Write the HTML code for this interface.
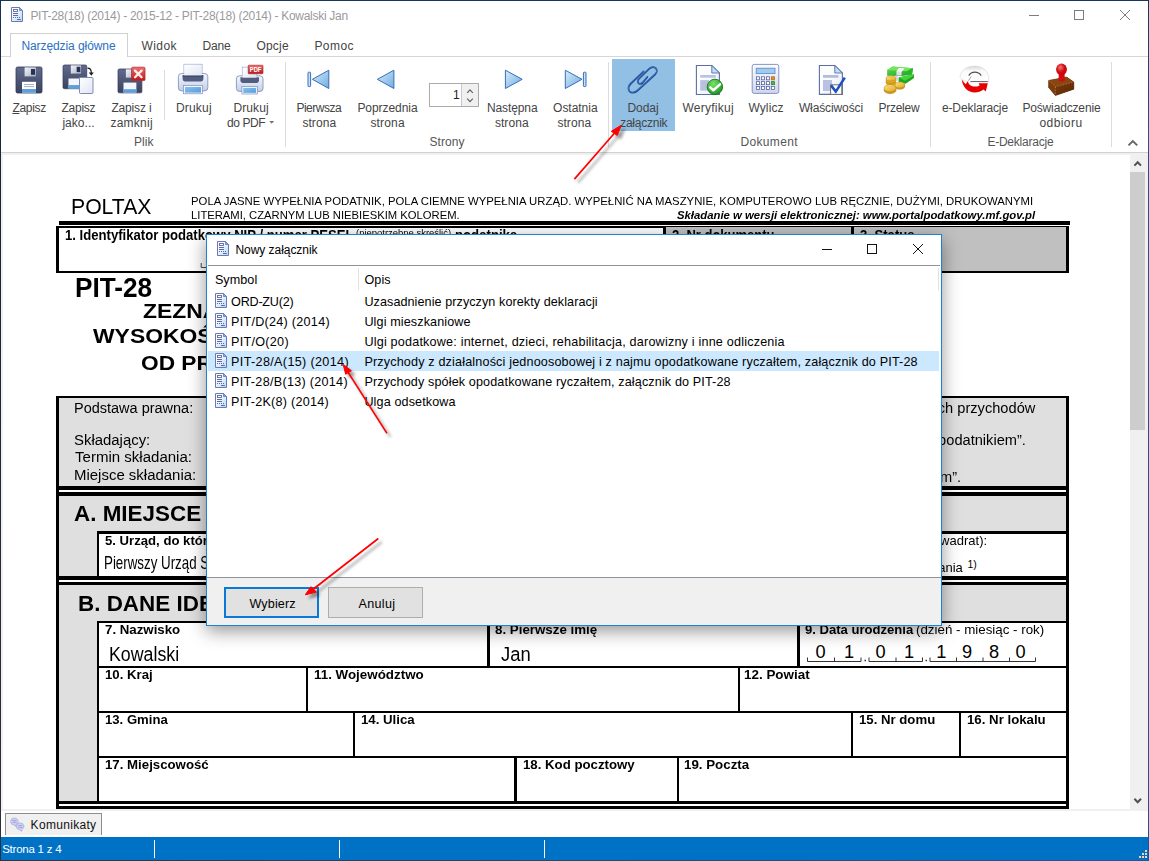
<!DOCTYPE html>
<html lang="pl"><head><meta charset="utf-8"><title>PIT-28(18) (2014)</title>
<style>
*{box-sizing:border-box;margin:0;padding:0}
html,body{width:1149px;height:861px;overflow:hidden;background:#fff;font-family:"Liberation Sans",sans-serif}
#app{position:absolute;left:0;top:0;width:1149px;height:861px;overflow:hidden;background:#fff}
.a{position:absolute}
.t{position:absolute;white-space:pre;font-family:"Liberation Sans",sans-serif}
.t u{text-decoration:underline;text-underline-offset:1px}
.k{position:absolute;background:#000}
.sepv{position:absolute;width:1px;background:#dcdcdc}
svg{position:absolute;overflow:visible}
</style></head><body><div id="app">
<!-- window frame -->
<div class="a" style="left:0;top:0;width:1149px;height:1px;background:#18355a"></div>
<div class="a" style="left:0;top:0;width:1px;height:861px;background:linear-gradient(#18304f,#1b2433 20%,#2b313b)"></div>
<div class="a" style="left:1148px;top:0;width:1px;height:861px;background:linear-gradient(#18355a,#23508c 15%,#23508c)"></div>
<div class="a" style="left:0;top:860px;width:1149px;height:1px;background:linear-gradient(90deg,#30363e,#2a5590)"></div>
<!-- tab strip -->
<div class="a" style="left:1px;top:56px;width:1147px;height:1px;background:#d6d6d6"></div>
<div class="a" style="left:10px;top:33px;width:118px;height:24px;background:#fff;border:1px solid #d0d0d0;border-bottom:none"></div>
<!-- ribbon bottom -->
<div class="a" style="left:1px;top:152px;width:1147px;height:1px;background:#d2d2d2"></div>
<div class="a" style="left:1px;top:153px;width:1147px;height:684px;background:#f0f0f0"></div>
<!-- ribbon separators -->
<div class="sepv" style="left:164px;top:70px;height:50px"></div>
<div class="sepv" style="left:285px;top:62px;height:85px"></div>
<div class="sepv" style="left:608px;top:62px;height:85px"></div>
<div class="sepv" style="left:930px;top:62px;height:85px"></div>
<div class="sepv" style="left:1111px;top:62px;height:85px"></div>
<!-- highlighted button -->
<div class="a" style="left:612px;top:59px;width:63px;height:72px;background:#91c0e4"></div>
<!-- spinner -->
<div class="a" style="left:429px;top:83px;width:50px;height:24px;background:#fff;border:1px solid #ababab"></div>
<div class="a" style="left:461px;top:84px;width:17px;height:22px;background:#f0f0f0;border-left:1px solid #c8c8c8"></div>
<!-- document viewer -->
<div class="a" id="doc" style="left:3px;top:155px;width:1127px;height:654px;background:#fff;overflow:hidden">
<div class="a" style="left:-3px;top:-155px;width:1149px;height:861px">
<!-- header rule -->
<div class="k" style="left:59px;top:221px;width:1011px;height:4px"></div>
<!-- row of boxes 1/2/3 -->
<div class="k" style="left:56px;top:226px;width:1013px;height:47px"></div>
<div class="a" style="left:59px;top:228px;width:604px;height:43px;background:#fff"></div>
<div class="a" style="left:666px;top:227px;width:185px;height:44px;background:#c0c0c0"></div>
<div class="a" style="left:854px;top:227px;width:212px;height:44px;background:#c0c0c0"></div>
<!-- big frame: left/right borders continuous 396..809 -->
<div class="k" style="left:56px;top:396px;width:1013px;height:413px"></div>
<!-- gray info box -->
<div class="a" style="left:59px;top:398px;width:1007px;height:88px;background:#dfdfdf"></div>
<div class="a" style="left:59px;top:490px;width:1007px;height:2px;background:#fff"></div>
<!-- section A -->
<div class="a" style="left:59px;top:496px;width:1007px;height:80px;background:#dfdfdf"></div>
<div class="k" style="left:97px;top:531.2px;width:969px;height:45px"></div>
<div class="a" style="left:99.2px;top:533.9px;width:966.8px;height:42.1px;background:#fff"></div>
<div class="a" style="left:59px;top:580px;width:1007px;height:2px;background:#fff"></div>
<!-- section B -->
<div class="a" style="left:59px;top:585px;width:1007px;height:216px;background:#dfdfdf"></div>
<div class="a" style="left:59px;top:804px;width:1007px;height:2px;background:#fff"></div>
<div class="k" style="left:97px;top:621px;width:969px;height:183px"></div>
<div class="a" style="left:99px;top:622.8px;width:967px;height:43.2px;background:#fff"></div>
<div class="a" style="left:99px;top:668px;width:967px;height:43px;background:#fff"></div>
<div class="a" style="left:99px;top:713px;width:967px;height:43px;background:#fff"></div>
<div class="a" style="left:99px;top:758px;width:967px;height:43px;background:#fff"></div>
<!-- column rules -->
<div class="k" style="left:487.2px;top:622px;width:2.8px;height:45px"></div>
<div class="k" style="left:797.1px;top:622px;width:2.5px;height:45px"></div>
<div class="k" style="left:306.2px;top:667px;width:2px;height:45px"></div>
<div class="k" style="left:737.5px;top:667px;width:2px;height:45px"></div>
<div class="k" style="left:353.1px;top:712px;width:2px;height:45px"></div>
<div class="k" style="left:851.2px;top:712px;width:2px;height:45px"></div>
<div class="k" style="left:959.1px;top:712px;width:2px;height:45px"></div>
<div class="k" style="left:514.4px;top:757px;width:2.5px;height:45px"></div>
<div class="k" style="left:676.5px;top:757px;width:2px;height:45px"></div>
<!-- date comb -->
<svg style="left:0;top:0" width="1149" height="861" viewBox="0 0 1149 861"><g fill="none" stroke="#333" stroke-width="1">
<path d="M807.5 657.5V661.5H861V657.5M834.5 657.5V661.5"/>
<path d="M869 657.5V661.5H922.5V657.5M896 657.5V661.5"/>
<path d="M930 657.5V661.5H1035.5V657.5M956.5 657.5V661.5M983 657.5V661.5M1009.5 657.5V661.5"/>
<path d="M864.5 660.5h1.5M925.5 660.5h1.5" stroke-width="1.6"/>
<path d="M201.2 263V267.5H212" stroke="#444"/>
</g></svg>

<span class="t" id="t36" style="left:71.15px;top:196.00px;font-size:21.2px;line-height:21.2px;color:#000;transform:scaleX(0.9998);transform-origin:0 0;">POLTAX</span>
<span class="t" id="t37" style="left:191.40px;top:196.00px;font-size:11px;line-height:11px;color:#000;transform:scaleX(1.0306);transform-origin:0 0;">POLA JASNE WYPEŁNIA PODATNIK, POLA CIEMNE WYPEŁNIA URZĄD. WYPEŁNIĆ NA MASZYNIE, KOMPUTEROWO LUB RĘCZNIE, DUŻYMI, DRUKOWANYMI</span>
<span class="t" id="t38" style="left:191.40px;top:210.00px;font-size:11px;line-height:11px;color:#000;transform:scaleX(1.0223);transform-origin:0 0;">LITERAMI, CZARNYM LUB NIEBIESKIM KOLOREM.</span>
<span class="t" id="t39" style="left:677.40px;top:210.00px;font-size:11px;line-height:11px;color:#000;font-weight:bold;font-style:italic;transform:scaleX(1.0305);transform-origin:0 0;">Składanie w wersji elektronicznej: www.portalpodatkowy.mf.gov.pl</span>
<span class="t" id="t40" style="left:65.10px;top:229.00px;font-size:13.9px;line-height:13.9px;color:#000;font-weight:bold;transform:scaleX(0.9446);transform-origin:0 0;">1. Identyfikator podatkowy NIP / numer PESEL</span>
<span class="t" id="t41" style="left:356.00px;top:229.00px;font-size:9.3px;line-height:9.3px;color:#000;transform:scaleX(1.0168);transform-origin:0 0;">(niepotrzebne skreślić)</span>
<span class="t" id="t42" style="left:454.60px;top:229.00px;font-size:13.9px;line-height:13.9px;color:#000;font-weight:bold;transform:scaleX(0.9496);transform-origin:0 0;">podatnika</span>
<span class="t" id="t43" style="left:671.60px;top:229.00px;font-size:13.9px;line-height:13.9px;color:#000;font-weight:bold;transform:scaleX(0.9353);transform-origin:0 0;">2. Nr dokumentu</span>
<span class="t" id="t44" style="left:859.70px;top:229.00px;font-size:13.9px;line-height:13.9px;color:#000;font-weight:bold;transform:scaleX(0.9412);transform-origin:0 0;">3. Status</span>
<span class="t" id="t45" style="left:75.40px;top:275.00px;font-size:27px;line-height:27px;color:#000;font-weight:bold;transform:scaleX(0.9705);transform-origin:0 0;">PIT-28</span>
<span class="t" id="t46" style="left:142.50px;top:301.00px;font-size:20.9px;line-height:20.9px;color:#000;font-weight:bold;transform:scaleX(1.0963);transform-origin:0 0;">ZEZNANIE O</span>
<span class="t" id="t47" style="left:93.00px;top:326.00px;font-size:20.9px;line-height:20.9px;color:#000;font-weight:bold;transform:scaleX(1.0959);transform-origin:0 0;">WYSOKOŚCI UZYSKANEGO</span>
<span class="t" id="t48" style="left:141.15px;top:353.00px;font-size:20.9px;line-height:20.9px;color:#000;font-weight:bold;transform:scaleX(1.0856);transform-origin:0 0;">OD PRZYCHODÓW</span>
<span class="t" id="t49" style="left:74.40px;top:402.00px;font-size:13.8px;line-height:13.8px;color:#000;transform:scaleX(1.0501);transform-origin:0 0;">Podstawa prawna:</span>
<span class="t" id="t50" style="left:74.15px;top:434.00px;font-size:13.8px;line-height:13.8px;color:#000;transform:scaleX(1.0806);transform-origin:0 0;">Składający:</span>
<span class="t" id="t51" style="left:74.80px;top:451.00px;font-size:13.8px;line-height:13.8px;color:#000;transform:scaleX(1.0898);transform-origin:0 0;">Termin składania:</span>
<span class="t" id="t52" style="left:74.15px;top:469.00px;font-size:13.8px;line-height:13.8px;color:#000;transform:scaleX(1.0844);transform-origin:0 0;">Miejsce składania:</span>
<span class="t" id="t53" style="right:114.10px;top:402.00px;font-size:13.8px;line-height:13.8px;color:#000;transform:scaleX(1.0600);transform-origin:100% 0;">niektórych przychodów</span>
<span class="t" id="t54" style="right:122.90px;top:434.00px;font-size:13.8px;line-height:13.8px;color:#000;transform:scaleX(1.0600);transform-origin:100% 0;">zwanych dalej „podatnikiem”.</span>
<span class="t" id="t55" style="right:187.40px;top:471.00px;font-size:13.8px;line-height:13.8px;color:#000;transform:scaleX(1.0600);transform-origin:100% 0;">zwanym dalej „urzędem”.</span>
<span class="t" id="t56" style="left:73.80px;top:502.00px;font-size:22.9px;line-height:22.9px;color:#000;font-weight:bold;transform:scaleX(0.9796);transform-origin:0 0;">A. MIEJSCE I CEL SKŁADANIA ZEZNANIA</span>
<span class="t" id="t57" style="left:105.40px;top:535.00px;font-size:12.8px;line-height:12.8px;color:#000;font-weight:bold;transform:scaleX(1.0264);transform-origin:0 0;">5. Urząd, do którego adresowane jest zeznanie</span>
<span class="t" id="t58" style="left:104.30px;top:554.00px;font-size:18.2px;line-height:18.2px;color:#000;transform:scaleX(0.7330);transform-origin:0 0;">Pierwszy Urząd Skarbowy</span>
<span class="t" id="t59" style="right:162.20px;top:535.00px;font-size:12.9px;line-height:12.9px;color:#000;transform:scaleX(1.0100);transform-origin:100% 0;">6. Cel złożenia formularza (zaznaczyć właściwy kwadrat):</span>
<span class="t" id="t60" style="right:185.80px;top:562.00px;font-size:12.9px;line-height:12.9px;color:#000;transform:scaleX(1.0100);transform-origin:100% 0;">1. złożenie zeznania</span>
<span class="t" id="t61" style="left:967.40px;top:559.00px;font-size:10.5px;line-height:10.5px;color:#000;">1)</span>
<span class="t" id="t62" style="left:77.50px;top:592.00px;font-size:22.9px;line-height:22.9px;color:#000;font-weight:bold;transform:scaleX(0.9799);transform-origin:0 0;">B. DANE IDENTYFIKACYJNE I ADRES ZAMIESZKANIA</span>
<span class="t" id="t63" style="left:105.40px;top:623.00px;font-size:13.1px;line-height:13.1px;color:#000;font-weight:bold;transform:scaleX(1.0130);transform-origin:0 0;">7. Nazwisko</span>
<span class="t" id="t64" style="left:109.10px;top:644.00px;font-size:20px;line-height:20px;color:#000;transform:scaleX(0.8882);transform-origin:0 0;">Kowalski</span>
<span class="t" id="t65" style="left:495.40px;top:623.00px;font-size:13.1px;line-height:13.1px;color:#000;font-weight:bold;transform:scaleX(1.0174);transform-origin:0 0;">8. Pierwsze imię</span>
<span class="t" id="t66" style="left:501.40px;top:644.00px;font-size:20px;line-height:20px;color:#000;transform:scaleX(0.9209);transform-origin:0 0;">Jan</span>
<span class="t" id="t67" style="left:805.40px;top:623.00px;font-size:13.1px;line-height:13.1px;color:#000;font-weight:bold;transform:scaleX(0.9980);transform-origin:0 0;">9. Data urodzenia</span>
<span class="t" id="t68" style="left:916.40px;top:623.00px;font-size:13.1px;line-height:13.1px;color:#000;transform:scaleX(1.0185);transform-origin:0 0;">(dzień - miesiąc - rok)</span>
<span class="t" id="t69" style="left:815.40px;top:643.00px;font-size:18.2px;line-height:18.2px;color:#000;">0</span>
<span class="t" id="t70" style="left:843.90px;top:643.00px;font-size:18.2px;line-height:18.2px;color:#000;">1</span>
<span class="t" id="t71" style="left:875.40px;top:643.00px;font-size:18.2px;line-height:18.2px;color:#000;">0</span>
<span class="t" id="t72" style="left:903.90px;top:643.00px;font-size:18.2px;line-height:18.2px;color:#000;">1</span>
<span class="t" id="t73" style="left:936.15px;top:643.00px;font-size:18.2px;line-height:18.2px;color:#000;">1</span>
<span class="t" id="t74" style="left:961.90px;top:643.00px;font-size:18.2px;line-height:18.2px;color:#000;">9</span>
<span class="t" id="t75" style="left:988.90px;top:643.00px;font-size:18.2px;line-height:18.2px;color:#000;">8</span>
<span class="t" id="t76" style="left:1015.40px;top:643.00px;font-size:18.2px;line-height:18.2px;color:#000;">0</span>
<span class="t" id="t77" style="left:105.40px;top:668.00px;font-size:13.1px;line-height:13.1px;color:#000;font-weight:bold;transform:scaleX(1.0082);transform-origin:0 0;">10. Kraj</span>
<span class="t" id="t78" style="left:313.90px;top:668.00px;font-size:13.1px;line-height:13.1px;color:#000;font-weight:bold;transform:scaleX(1.0211);transform-origin:0 0;">11. Województwo</span>
<span class="t" id="t79" style="left:744.40px;top:668.00px;font-size:13.1px;line-height:13.1px;color:#000;font-weight:bold;transform:scaleX(1.0258);transform-origin:0 0;">12. Powiat</span>
<span class="t" id="t80" style="left:105.40px;top:713.00px;font-size:13.1px;line-height:13.1px;color:#000;font-weight:bold;transform:scaleX(1.0017);transform-origin:0 0;">13. Gmina</span>
<span class="t" id="t81" style="left:361.40px;top:713.00px;font-size:13.1px;line-height:13.1px;color:#000;font-weight:bold;transform:scaleX(1.0105);transform-origin:0 0;">14. Ulica</span>
<span class="t" id="t82" style="left:859.40px;top:713.00px;font-size:13.1px;line-height:13.1px;color:#000;font-weight:bold;transform:scaleX(1.0070);transform-origin:0 0;">15. Nr domu</span>
<span class="t" id="t83" style="left:967.40px;top:713.00px;font-size:13.1px;line-height:13.1px;color:#000;font-weight:bold;transform:scaleX(1.0106);transform-origin:0 0;">16. Nr lokalu</span>
<span class="t" id="t84" style="left:105.40px;top:758.00px;font-size:13.1px;line-height:13.1px;color:#000;font-weight:bold;transform:scaleX(1.0105);transform-origin:0 0;">17. Miejscowość</span>
<span class="t" id="t85" style="left:522.90px;top:758.00px;font-size:13.1px;line-height:13.1px;color:#000;font-weight:bold;transform:scaleX(1.0100);transform-origin:0 0;">18. Kod pocztowy</span>
<span class="t" id="t86" style="left:684.40px;top:758.00px;font-size:13.1px;line-height:13.1px;color:#000;font-weight:bold;transform:scaleX(1.0180);transform-origin:0 0;">19. Poczta</span>
</div></div>
<!-- scrollbar -->
<div class="a" style="left:1130px;top:155px;width:17px;height:656px;background:#f0f0f0"></div>
<div class="a" style="left:1130px;top:172px;width:15px;height:258px;background:#cdcdcd"></div>
<svg style="left:1130px;top:155px" width="18" height="654" viewBox="0 0 18 654"><path d="M4.4 10.6 L7.7 7.2 L11 10.6" fill="none" stroke="#505050" stroke-width="2"/><path d="M4.4 643.8 L7.7 647.2 L11 643.8" fill="none" stroke="#505050" stroke-width="2"/></svg>
<!-- bottom tab strip -->
<div class="a" style="left:1px;top:811px;width:1147px;height:26px;background:#fff"></div>
<div class="a" style="left:5px;top:813px;width:97px;height:22px;background:#f0f0f0;border:1px solid #8e8e8e;border-bottom:none"></div>
<!-- status bar -->
<div class="a" style="left:1px;top:837px;width:1147px;height:23px;background:#0072c6"></div>
<div class="a" style="left:154px;top:840px;width:1px;height:18px;background:#fff"></div>
<div class="a" style="left:339px;top:840px;width:1px;height:18px;background:#fff"></div>
<div class="a" style="left:544px;top:840px;width:1px;height:18px;background:#fff"></div>
<svg style="left:0;top:0" width="1149" height="861" viewBox="0 0 1149 861">
<defs>
<linearGradient id="gFl" x1="0" y1="0" x2="0" y2="1"><stop offset="0" stop-color="#626b8c"/><stop offset="1" stop-color="#3a4261"/></linearGradient>
<linearGradient id="gSh" x1="0" y1="0" x2="1" y2="1"><stop offset="0" stop-color="#f2f4f8"/><stop offset="1" stop-color="#aab3c6"/></linearGradient>
<linearGradient id="gPg" x1="0" y1="0" x2="1" y2="1"><stop offset="0" stop-color="#ffffff"/><stop offset="1" stop-color="#dfe5f3"/></linearGradient>
<linearGradient id="gPr" x1="0" y1="0" x2="0" y2="1"><stop offset="0" stop-color="#f4f7fc"/><stop offset="1" stop-color="#c3cee6"/></linearGradient>
<linearGradient id="gTr" x1="0" y1="0" x2="1" y2="1"><stop offset="0" stop-color="#8cc4ee"/><stop offset="1" stop-color="#4f9adb"/></linearGradient>
<linearGradient id="gAr" x1="0" y1="0" x2="1" y2="1"><stop offset="0" stop-color="#d6ecfa"/><stop offset="1" stop-color="#6eace2"/></linearGradient>
<linearGradient id="gRd" x1="0" y1="0" x2="0" y2="1"><stop offset="0" stop-color="#f07070"/><stop offset="1" stop-color="#b81818"/></linearGradient>
<linearGradient id="gDoc" x1="0" y1="0" x2="1" y2="1"><stop offset="0" stop-color="#ffffff"/><stop offset=".5" stop-color="#fafbfe"/><stop offset="1" stop-color="#dfe6f5"/></linearGradient>
<radialGradient id="gGr" cx=".4" cy=".3" r=".8"><stop offset="0" stop-color="#7be36a"/><stop offset="1" stop-color="#128a1a"/></radialGradient>
<linearGradient id="gCalc" x1="0" y1="0" x2="0" y2="1"><stop offset="0" stop-color="#fbfcfe"/><stop offset="1" stop-color="#cfd7ec"/></linearGradient>
<linearGradient id="gGold" x1="0" y1="0" x2="1" y2="1"><stop offset="0" stop-color="#fbe47e"/><stop offset="1" stop-color="#dca722"/></linearGradient>
<linearGradient id="gBill" x1="0" y1="0" x2="1" y2="1"><stop offset="0" stop-color="#62e052"/><stop offset="1" stop-color="#1c9a24"/></linearGradient>
<linearGradient id="gBrown" x1="0" y1="0" x2="1" y2="1"><stop offset="0" stop-color="#7a3a08"/><stop offset="1" stop-color="#5c2804"/></linearGradient>
<radialGradient id="gBall" cx=".4" cy=".35" r=".7"><stop offset="0" stop-color="#ee7a7a"/><stop offset=".55" stop-color="#d40a10"/><stop offset="1" stop-color="#c00008"/></radialGradient>
<linearGradient id="gE" x1="0" y1="0" x2="0" y2="1"><stop offset="0" stop-color="#ffffff"/><stop offset="1" stop-color="#ebebeb"/></linearGradient>
<linearGradient id="gE2" x1="0" y1="0" x2="0" y2="1"><stop offset="0" stop-color="#d4d4d4"/><stop offset=".3" stop-color="#fafafa"/><stop offset="1" stop-color="#ffffff"/></linearGradient>
<linearGradient id="gSm" x1="0" y1="0" x2="1" y2="1"><stop offset="0" stop-color="#ffffff"/><stop offset=".35" stop-color="#f2f9fe"/><stop offset="1" stop-color="#b0d8f6"/></linearGradient>
<!-- floppy 26x26 at 0,0 -->
<g id="floppy"><rect x="0" y="0" width="26" height="26" rx="1.6" fill="url(#gFl)" stroke="#343b58" stroke-width=".8"/>
<rect x="8.6" y="0.4" width="11.2" height="9" fill="url(#gSh)"/><rect x="15" y="2" width="4" height="5.8" fill="#2a3150"/>
<rect x="6" y="14.8" width="14" height="10.8" fill="#fff"/><rect x="6" y="22" width="14" height="3.6" fill="#5aa0df"/>
<path d="M8 17.5h10M8 19.6h10" stroke="#9aa7c4" stroke-width=".9"/></g>
<g id="floppy2"><rect x="0" y="0" width="26" height="26" rx="1.6" fill="url(#gFl)" stroke="#343b58" stroke-width=".8"/>
<rect x="8.6" y="0.4" width="11.2" height="9" fill="url(#gSh)"/><rect x="15" y="2" width="4" height="5.8" fill="#2a3150"/>
<rect x="6" y="14.8" width="14" height="10.8" fill="#f4f6fb"/><rect x="6" y="22" width="14" height="3.6" fill="#5aa0df"/></g>
<!-- small doc icon 12x15 -->
<g id="sdoc"><path d="M0.5 0.5H8.5L11.5 3.5V14.5H0.5Z" fill="url(#gSm)" stroke="#6a78b6" stroke-width="1"/>
<path d="M8.5 0.5V3.5H11.5Z" fill="#6cb4f4" stroke="#6a78b6" stroke-width=".8"/>
<rect x="2.5" y="2.5" width="4" height="2" fill="#ffffff" stroke="#6268a4" stroke-width=".9"/>
<path d="M2 6.5h5M2 8.5h5" stroke="#6268a4" stroke-width="1"/>
<path d="M2 10.5h1M4 10.5h1M6 10.5h1M8 10.5h1" stroke="#6268a4" stroke-width="1"/>
<path d="M6 12.5h3.8" stroke="#6268a4" stroke-width="1"/></g>
</defs>
<!-- Zapisz -->
<use href="#floppy" x="16" y="67"/>
<!-- Zapisz jako -->
<g transform="translate(63,65) scale(.912)"><use href="#floppy2"/></g>
<rect x="79.5" y="77.5" width="13.5" height="16" rx=".8" fill="url(#gPg)" stroke="#7f8cbb" stroke-width="1"/>
<path d="M87.5 68.2C90.5 68.2 91.3 69.6 91.3 73" fill="none" stroke="#1a1a1a" stroke-width="1.2"/><path d="M88.8 72.4h5l-2.5 3.4z" fill="#1a1a1a"/>
<!-- Zapisz i zamknij -->
<g transform="translate(118,69) scale(.918)"><use href="#floppy2"/></g>
<rect x="131.6" y="67.2" width="13.4" height="13.4" rx="1.2" fill="url(#gRd)" stroke="#b03030" stroke-width=".8"/>
<path d="M135 70.6l6.6 6.6M141.6 70.6l-6.6 6.6" stroke="#fdeeee" stroke-width="2.3" stroke-linecap="round"/>
<!-- Drukuj -->
<g id="printer">
<rect x="184" y="64.3" width="18" height="13" fill="url(#gPg)" stroke="#8a97c6" stroke-width=".8"/>
<rect x="178.4" y="73.5" width="29.4" height="17.4" rx="3.2" fill="url(#gPr)" stroke="#8593c4" stroke-width=".9"/>
<path d="M182.6 75H203.4V78.4Q203.4 81.6 199.6 81.6H186.4Q182.6 81.6 182.6 78.4Z" fill="#525c7e"/>
<rect x="184.2" y="64.6" width="17.6" height="11" fill="url(#gPg)"/>
<path d="M182.8 76.2H203.2" stroke="#3c4566" stroke-width="1"/>
<rect x="184.3" y="86.3" width="17.4" height="7" fill="url(#gTr)" stroke="#f2f6fc" stroke-width="1.4"/>
<rect x="183.6" y="85.6" width="18.8" height="8.2" fill="none" stroke="#7f8fc4" stroke-width=".7"/>
</g>
<!-- Drukuj do PDF -->
<g>
<rect x="242.3" y="67.2" width="14.4" height="11" fill="url(#gPg)" stroke="#8a97c6" stroke-width=".8"/>
<rect x="236.4" y="75.8" width="26.6" height="15.6" rx="3" fill="url(#gPr)" stroke="#8593c4" stroke-width=".9"/>
<path d="M240.4 77.2H259V80.2Q259 83 255.6 83H243.8Q240.4 83 240.4 80.2Z" fill="#525c7e"/>
<rect x="242.6" y="67.6" width="13.8" height="10" fill="url(#gPg)"/>
<rect x="242.6" y="87.3" width="14" height="6.2" fill="url(#gTr)" stroke="#f2f6fc" stroke-width="1.3"/>
<rect x="241.9" y="86.6" width="15.4" height="7.4" fill="none" stroke="#7f8fc4" stroke-width=".7"/>
<rect x="248.2" y="65.2" width="14.8" height="8.6" rx=".8" fill="url(#gRd)" stroke="#a81c1c" stroke-width=".6"/>
<text x="255.6" y="72.3" font-family="Liberation Sans, sans-serif" font-size="7.2" font-weight="bold" fill="#fff" text-anchor="middle" textLength="11.5" lengthAdjust="spacingAndGlyphs">PDF</text>
</g>
<path d="M269.2 121l2.5 2.8l2.5-2.8z" fill="#777"/>
<!-- nav arrows -->
<g stroke="#3a6cb8" stroke-width="1" stroke-linejoin="round">
<rect x="308" y="72.2" width="2.6" height="14.4" rx=".8" fill="#c4e2f8"/>
<path d="M312.4 79.3L328.8 70.2V88.5Z" fill="url(#gAr)"/>
<path d="M377.4 79.3L393.9 70.2V88.5Z" fill="url(#gAr)"/>
<path d="M522.2 79.3L505.4 70.2V88.5Z" fill="url(#gAr)"/>
<path d="M582 79.3L565.3 70.2V88.5Z" fill="url(#gAr)"/>
<rect x="583.4" y="72.2" width="2.6" height="14.4" rx=".8" fill="#c4e2f8"/>
</g>
<!-- spinner arrows -->
<path d="M467.2 92.8l2.8-3l2.8 3M467.2 98.6l2.8 3l2.8-3" fill="none" stroke="#606060" stroke-width="1.2"/>
<!-- paperclip -->
<g fill="none" stroke-linecap="round" stroke-linejoin="round">
<path id="clip" d="M643.4 71.1L630.6 83.2C626.6 87 628 92.4 632.5 92.3C634.5 92.3 636 91.5 637.6 90L655 74C658 71 656.6 66.8 652.6 66.9C651 66.9 649.9 67.5 648.5 68.8L638.6 78.6C636.5 80.6 637.5 83.6 640 83.5C641 83.5 641.8 83 642.6 82.2L647.2 76.7" stroke="#1c3a7c" stroke-width="1.5" transform="translate(.3,.4)"/>
<path d="M643.4 71.1L630.6 83.2C626.6 87 628 92.4 632.5 92.3C634.5 92.3 636 91.5 637.6 90L655 74C658 71 656.6 66.8 652.6 66.9C651 66.9 649.9 67.5 648.5 68.8L638.6 78.6C636.5 80.6 637.5 83.6 640 83.5C641 83.5 641.8 83 642.6 82.2L647.2 76.7" stroke="#356cbc" stroke-width="1.15"/>
</g>
<!-- Weryfikuj -->
<g>
<path d="M696.4 65.5H711.8L719.4 73V94.5H696.4Z" fill="url(#gDoc)" stroke="#5e6ea2" stroke-width="1.1"/>
<path d="M711.8 65.5V73H719.4Z" fill="#bfe0fa" stroke="#5e6ea2" stroke-width=".9"/>
<rect x="700.2" y="75" width="15.6" height="2.7" fill="#b8c2e2"/><rect x="700.2" y="80.1" width="8.8" height="10.6" fill="#b8c2e0"/>
<circle cx="714.9" cy="86.9" r="7.7" fill="url(#gGr)" stroke="#137c12" stroke-width=".9"/>
<path d="M710.3 87.4L713.3 90.3L720 84.4" fill="none" stroke="#fff" stroke-width="2.5" stroke-linecap="round" stroke-linejoin="round"/>
</g>
<!-- Wylicz -->
<g>
<rect x="752.2" y="64.4" width="26.6" height="29" rx="2" fill="url(#gCalc)" stroke="#7c88bc" stroke-width=".9"/>
<rect x="756.2" y="68.2" width="18.8" height="5.4" fill="#9ecbf0" stroke="#5c86c4" stroke-width=".8"/>
<g fill="#fff" stroke="#5a64a0" stroke-width=".8">
<rect x="756.4" y="76.8" width="3" height="3"/><rect x="761.4" y="76.8" width="3" height="3"/><rect x="766.4" y="76.8" width="3" height="3"/><rect x="771.4" y="76.8" width="3" height="3" fill="#ef8a2e" stroke="#b8641c"/>
<rect x="756.4" y="81.6" width="3" height="3"/><rect x="761.4" y="81.6" width="3" height="3"/><rect x="766.4" y="81.6" width="3" height="3"/><rect x="771.4" y="81.6" width="3" height="3" fill="#48b83e" stroke="#2a8a26"/>
<rect x="756.4" y="86.4" width="3" height="3"/><rect x="761.4" y="86.4" width="3" height="3"/><rect x="766.4" y="86.4" width="3" height="3"/><rect x="771.4" y="86.4" width="3" height="3"/>
</g></g>
<!-- Wlasciwosci -->
<g>
<path d="M819.4 65.5H834.8L842.4 73V94.4H819.4Z" fill="url(#gDoc)" stroke="#5e6ea2" stroke-width="1.1"/>
<path d="M834.8 65.5V73H842.4Z" fill="#bfe0fa" stroke="#5e6ea2" stroke-width=".9"/>
<rect x="823" y="75" width="15.5" height="2.8" fill="#b3bcdd"/><rect x="823" y="80" width="9" height="11" fill="#b9c2e0"/>
<rect x="830.6" y="84.8" width="11.2" height="9.6" fill="#fdfdfd" stroke="#6e6e6e" stroke-width="1"/>
<path d="M831 85.4L835.8 91.6L844.8 77.6" fill="none" stroke="#1e50c2" stroke-width="2.6" stroke-linejoin="miter"/>
</g>
<!-- Przelew -->
<g>
<path d="M898.6 77.4L914 74.3V78L905.7 83.8L898.6 81.8Z" fill="#1fa624"/>
<path d="M898.6 77.4L914 74.3L913.4 76L905 80.8Z" fill="#45d338"/>
<path d="M887.1 70L892.6 66.4L913 68.2L912 74.4L902.1 75.9L887.1 75.7Z" fill="url(#gBill)"/>
<path d="M887.1 70L892.6 66.4L913 68.2L906.5 71.2Z" fill="#6fe85c"/>
<path d="M906.5 71.2L913 68.2L912 74.4L906.5 75.3Z" fill="#2bb42c"/>
<path d="M899 68L904.3 68.4L901.6 71.8V75.6H896.4V71.6Z" fill="#dedee4"/>
<path d="M899 68L904.3 68.4L901.6 71.8L896.4 71.6Z" fill="#f4f4f8"/>
<path d="M895.4 75.8H897.9V80.8H895.4Z" fill="#d6d6de"/>
<g stroke="#b8800f" stroke-width=".5">
<ellipse cx="890.9" cy="82.6" rx="4.9" ry="2.6" fill="#d9a21e"/><ellipse cx="890.9" cy="80.6" rx="4.9" ry="2.6" fill="#e0ac24"/><ellipse cx="890.9" cy="78.4" rx="4.9" ry="2.6" fill="url(#gGold)"/>
<ellipse cx="899.8" cy="86.3" rx="4.8" ry="3" fill="#d29a1a"/><ellipse cx="899.8" cy="85" rx="4.8" ry="3" fill="url(#gGold)"/>
<ellipse cx="890.1" cy="90" rx="6.1" ry="3.7" fill="#cf961a"/><ellipse cx="890.1" cy="88.2" rx="6.1" ry="3.7" fill="url(#gGold)"/>
</g></g>
<!-- e-Deklaracje -->
<g>
<path d="M959.9 77.2C961 70 967 66 974.8 66C983 66 988.9 72 988.9 79L988.4 82H968.6L961.7 79.4Z" fill="url(#gE2)" stroke="#dedede" stroke-width=".8"/>
<path d="M968.8 75.6C970.2 73.2 972.4 72.1 974.8 72.1C977.4 72.1 979.8 73.4 981.2 75.6" fill="none" stroke="#505050" stroke-width="1.1"/>
<path d="M971.2 76.6L968.4 80.8" stroke="#8a8a8a" stroke-width=".8"/>
<path d="M970.4 81.5H987.8" stroke="#6e6e6e" stroke-width="1"/>
<path d="M961.7 79.4L965.6 84.2L967.8 81.2C968.6 84.6 971.4 86.6 974.8 86.6C976.6 86.6 978.2 86.2 979.6 85.4L978.7 83.3H987.8L985.8 91.6L983.6 89.4C981 91.4 978 92.4 974.8 92.4C968 92.4 962.6 87.2 961.7 79.4Z" fill="#e60000"/>
</g>
<!-- stamp -->
<g>
<path d="M1048.7 80.4L1066.7 77.1L1073.8 82.1V89.2L1055.4 95.5L1048.7 87.5Z" fill="#74360a" stroke="#3c1602" stroke-width=".5"/>
<path d="M1048.7 80.4L1066.7 77.1L1073.8 82.1L1055.4 86.7Z" fill="#8a4610"/>
<path d="M1048.7 80.4L1055.4 86.7V95.5L1048.7 87.5Z" fill="#7e3c0a"/>
<path d="M1055.4 86.7L1073.8 82.1V89.2L1055.4 95.5Z" fill="url(#gBrown)"/>
<path d="M1048.7 80.4L1055.4 86.7L1073.8 82.1M1055.4 86.7V95.2" fill="none" stroke="#e4c0a4" stroke-opacity=".65" stroke-width=".6" stroke-dasharray="1.6 1.2"/>
<path d="M1058.7 73.5H1064.6L1064.8 80.6Q1061.8 82.6 1058.6 80.6Z" fill="#d4080f"/>
<ellipse cx="1061.5" cy="69.3" rx="5.4" ry="5.9" fill="url(#gBall)"/>
</g>
<!-- collapse caret -->
<path d="M1128.5 145.4L1132.8 141L1137.2 145.4" fill="none" stroke="#666" stroke-width="1.9"/>
<!-- window controls -->
<g fill="none" stroke="#7d7d7d" stroke-width="1"><path d="M1029 15.5h10"/><rect x="1074.5" y="10.5" width="9" height="9"/><path d="M1120 10l10 10M1130 10l-10 10"/></g>
<!-- title icon -->
<use href="#sdoc" x="11" y="7"/>
<!-- komunikaty icon -->
<g fill="#cfd1f3" stroke="#a3a6dc" stroke-width=".7">
<path d="M10.6 821.4a3.8 3.4 0 1 1 5.2 3.2l.6 2.2l-2.4-1.8a3.8 3.4 0 0 1 -3.4 -3.6z"/>
<path d="M16.4 826.4a3.8 3.4 0 1 1 5.4 3l-.2 2l-1.8-1.600a3.8 3.4 0 0 1 -3.4 -3.4z"/>
</g>
<path d="M12.4 820.6h4M12.4 822.4h4M18.4 825.6h4M18.4 827.4h4" stroke="#8f93cf" stroke-width=".7"/>
<!-- resize grip -->
<g fill="#f2d3b4"><rect x="1145" y="850" width="2" height="2"/><rect x="1142" y="853" width="2" height="2"/><rect x="1145" y="853" width="2" height="2"/><rect x="1139" y="856" width="2" height="2"/><rect x="1142" y="856" width="2" height="2"/><rect x="1145" y="856" width="2" height="2"/></g>
</svg>

<span class="t" id="t0" style="left:30.40px;top:10.00px;font-size:12px;line-height:12px;color:#9a9a9a;letter-spacing:-0.292px;">PIT-28(18) (2014) - 2015-12 - PIT-28(18) (2014) - Kowalski Jan</span>
<span class="t" id="t1" style="left:21.40px;top:40.00px;font-size:12px;line-height:12px;color:#2a70c2;letter-spacing:-0.079px;">Narzędzia główne</span>
<span class="t" id="t2" style="left:141.40px;top:40.00px;font-size:12px;line-height:12px;color:#444;letter-spacing:0.464px;">Widok</span>
<span class="t" id="t3" style="left:202.40px;top:40.00px;font-size:12px;line-height:12px;color:#444;letter-spacing:-0.163px;">Dane</span>
<span class="t" id="t4" style="left:256.40px;top:40.00px;font-size:12px;line-height:12px;color:#444;letter-spacing:0.210px;">Opcje</span>
<span class="t" id="t5" style="left:314.40px;top:40.00px;font-size:12px;line-height:12px;color:#444;letter-spacing:0.460px;">Pomoc</span>
<span class="t" id="t6" style="left:12.40px;top:102.00px;font-size:12px;line-height:12px;color:#444;letter-spacing:-0.282px;"><u>Z</u>apisz</span>
<span class="t" id="t7" style="left:61.40px;top:102.00px;font-size:12px;line-height:12px;color:#444;letter-spacing:-0.229px;">Zapisz</span>
<span class="t" id="t8" style="left:62.40px;top:117.00px;font-size:12px;line-height:12px;color:#444;letter-spacing:0.031px;">jako...</span>
<span class="t" id="t9" style="left:111.40px;top:102.00px;font-size:12px;line-height:12px;color:#444;letter-spacing:-0.163px;">Zapisz i</span>
<span class="t" id="t10" style="left:110.40px;top:117.00px;font-size:12px;line-height:12px;color:#444;letter-spacing:0.252px;">zamknij</span>
<span class="t" id="t11" style="left:175.90px;top:102.00px;font-size:12px;line-height:12px;color:#444;letter-spacing:0.203px;">Drukuj</span>
<span class="t" id="t12" style="left:233.40px;top:102.00px;font-size:12px;line-height:12px;color:#444;letter-spacing:0.103px;">Drukuj</span>
<span class="t" id="t13" style="left:226.90px;top:117.00px;font-size:12px;line-height:12px;color:#444;letter-spacing:-0.397px;">do PDF</span>
<span class="t" id="t14" style="left:133.90px;top:136.00px;font-size:12px;line-height:12px;color:#555;letter-spacing:0.119px;">Plik</span>
<span class="t" id="t15" style="left:296.40px;top:102.00px;font-size:12px;line-height:12px;color:#444;letter-spacing:-0.498px;">Pierwsza</span>
<span class="t" id="t16" style="left:302.40px;top:117.00px;font-size:12px;line-height:12px;color:#444;letter-spacing:0.068px;">strona</span>
<span class="t" id="t17" style="left:357.40px;top:102.00px;font-size:12px;line-height:12px;color:#444;letter-spacing:-0.058px;">Poprzednia</span>
<span class="t" id="t18" style="left:370.40px;top:117.00px;font-size:12px;line-height:12px;color:#444;letter-spacing:0.168px;">strona</span>
<span class="t" id="t19" style="left:453.10px;top:89.00px;font-size:12px;line-height:12px;color:#222;">1</span>
<span class="t" id="t20" style="left:486.90px;top:102.00px;font-size:12px;line-height:12px;color:#444;letter-spacing:-0.096px;">Następna</span>
<span class="t" id="t21" style="left:494.90px;top:117.00px;font-size:12px;line-height:12px;color:#444;letter-spacing:0.068px;">strona</span>
<span class="t" id="t22" style="left:553.10px;top:102.00px;font-size:12px;line-height:12px;color:#444;letter-spacing:-0.029px;">Ostatnia</span>
<span class="t" id="t23" style="left:557.40px;top:117.00px;font-size:12px;line-height:12px;color:#444;letter-spacing:0.068px;">strona</span>
<span class="t" id="t24" style="left:429.40px;top:136.00px;font-size:12px;line-height:12px;color:#555;letter-spacing:0.103px;">Strony</span>
<span class="t" id="t25" style="left:627.40px;top:102.00px;font-size:12px;line-height:12px;color:#444;letter-spacing:-0.040px;">Dodaj</span>
<span class="t" id="t26" style="left:620.15px;top:117.00px;font-size:12px;line-height:12px;color:#444;letter-spacing:-0.239px;">załącznik</span>
<span class="t" id="t27" style="left:682.40px;top:102.00px;font-size:12px;line-height:12px;color:#444;letter-spacing:0.259px;">Weryfikuj</span>
<span class="t" id="t28" style="left:748.40px;top:102.00px;font-size:12px;line-height:12px;color:#444;letter-spacing:0.128px;">Wylicz</span>
<span class="t" id="t29" style="left:798.90px;top:102.00px;font-size:12px;line-height:12px;color:#444;letter-spacing:-0.114px;">Właściwości</span>
<span class="t" id="t30" style="left:878.40px;top:102.00px;font-size:12px;line-height:12px;color:#444;letter-spacing:-0.248px;">Przelew</span>
<span class="t" id="t31" style="left:740.40px;top:136.00px;font-size:12px;line-height:12px;color:#555;letter-spacing:0.357px;">Dokument</span>
<span class="t" id="t32" style="left:941.90px;top:102.00px;font-size:12px;line-height:12px;color:#444;letter-spacing:-0.105px;">e-Deklaracje</span>
<span class="t" id="t33" style="left:1022.40px;top:102.00px;font-size:12px;line-height:12px;color:#444;letter-spacing:-0.154px;">Poświadczenie</span>
<span class="t" id="t34" style="left:1039.40px;top:117.00px;font-size:12px;line-height:12px;color:#444;letter-spacing:0.445px;">odbioru</span>
<span class="t" id="t35" style="left:987.40px;top:136.00px;font-size:12px;line-height:12px;color:#555;letter-spacing:-0.228px;">E-Deklaracje</span>
<span class="t" id="t104" style="left:30.60px;top:819.00px;font-size:12px;line-height:12px;color:#111;letter-spacing:0.311px;">Komunikaty</span>
<span class="t" id="t105" style="left:2.20px;top:844.00px;font-size:11.5px;line-height:11.5px;color:#fff;letter-spacing:-0.238px;">Strona 1 z 4</span>
<div class="a" id="dlg" style="left:206px;top:234px;width:736px;height:392px;background:#fff;border:1px solid #1883d7;box-shadow:0 5px 17px 0 rgba(0,0,0,.42)"></div>
<div class="a" style="left:208px;top:265px;width:732px;height:1px;background:#8d929b"></div>
<div class="a" style="left:358px;top:268px;width:1px;height:22px;background:#e1e1e1"></div>
<div class="a" style="left:938px;top:268px;width:1px;height:22px;background:#e1e1e1"></div>
<div class="a" style="left:208px;top:351px;width:731px;height:20px;background:#cce8ff"></div>
<div class="a" style="left:207px;top:577px;width:734px;height:1px;background:#8d929b"></div>
<div class="a" style="left:207px;top:578px;width:734px;height:47px;background:#f0f0f0"></div>
<div class="a" style="left:224px;top:587px;width:95px;height:31px;background:#e1e1e1;border:2px solid #0a78d7"></div>
<div class="a" style="left:328px;top:587px;width:95px;height:31px;background:#e1e1e1;border:1px solid #adadad"></div>
<svg style="left:0;top:0" width="1149" height="861" viewBox="0 0 1149 861"><g fill="none" stroke="#111" stroke-width="1">
<path d="M822 249.5h10"/><rect x="867.5" y="244.5" width="9" height="9"/><path d="M913 244l10 10M923 244l-10 10"/></g><use href="#sdoc" x="217" y="241"/><use href="#sdoc" x="215" y="293"/><use href="#sdoc" x="215" y="313"/><use href="#sdoc" x="215" y="333"/><use href="#sdoc" x="215" y="353"/><use href="#sdoc" x="215" y="373"/><use href="#sdoc" x="215" y="393"/></svg>
<span class="t" id="t87" style="left:235.40px;top:244.00px;font-size:12px;line-height:12px;color:#000;letter-spacing:-0.039px;">Nowy załącznik</span>
<span class="t" id="t88" style="left:214.90px;top:274.00px;font-size:12.6px;line-height:12.6px;color:#000;letter-spacing:0.060px;">Symbol</span>
<span class="t" id="t89" style="left:364.40px;top:274.00px;font-size:12.6px;line-height:12.6px;color:#000;letter-spacing:0.098px;">Opis</span>
<span class="t" id="t90" style="left:231.10px;top:296.00px;font-size:12.6px;line-height:12.6px;color:#000;letter-spacing:-0.232px;">ORD-ZU(2)</span>
<span class="t" id="t91" style="left:364.40px;top:296.00px;font-size:12.6px;line-height:12.6px;color:#000;letter-spacing:0.074px;">Uzasadnienie przyczyn korekty deklaracji</span>
<span class="t" id="t92" style="left:231.10px;top:316.00px;font-size:12.6px;line-height:12.6px;color:#000;letter-spacing:0.268px;">PIT/D(24) (2014)</span>
<span class="t" id="t93" style="left:364.40px;top:316.00px;font-size:12.6px;line-height:12.6px;color:#000;letter-spacing:0.119px;">Ulgi mieszkaniowe</span>
<span class="t" id="t94" style="left:231.10px;top:336.00px;font-size:12.6px;line-height:12.6px;color:#000;letter-spacing:0.275px;">PIT/O(20)</span>
<span class="t" id="t95" style="left:364.40px;top:336.00px;font-size:12.6px;line-height:12.6px;color:#000;letter-spacing:0.198px;">Ulgi podatkowe: internet, dzieci, rehabilitacja, darowizny i inne odliczenia</span>
<span class="t" id="t96" style="left:231.10px;top:356.00px;font-size:12.6px;line-height:12.6px;color:#000;letter-spacing:0.345px;">PIT-28/A(15) (2014)</span>
<span class="t" id="t97" style="left:364.40px;top:356.00px;font-size:12.6px;line-height:12.6px;color:#000;letter-spacing:0.164px;">Przychody z działalności jednoosobowej i z najmu opodatkowane ryczałtem, załącznik do PIT-28</span>
<span class="t" id="t98" style="left:231.10px;top:376.00px;font-size:12.6px;line-height:12.6px;color:#000;letter-spacing:0.289px;">PIT-28/B(13) (2014)</span>
<span class="t" id="t99" style="left:364.40px;top:376.00px;font-size:12.6px;line-height:12.6px;color:#000;letter-spacing:0.132px;">Przychody spółek opodatkowane ryczałtem, załącznik do PIT-28</span>
<span class="t" id="t100" style="left:231.10px;top:396.00px;font-size:12.6px;line-height:12.6px;color:#000;letter-spacing:0.247px;">PIT-2K(8) (2014)</span>
<span class="t" id="t101" style="left:364.40px;top:396.00px;font-size:12.6px;line-height:12.6px;color:#000;letter-spacing:0.122px;">Ulga odsetkowa</span>
<span class="t" id="t102" style="left:249.40px;top:598.00px;font-size:12.6px;line-height:12.6px;color:#000;letter-spacing:0.138px;">Wybierz</span>
<span class="t" id="t103" style="left:358.40px;top:598.00px;font-size:12.6px;line-height:12.6px;color:#000;letter-spacing:0.337px;">Anuluj</span>

<svg style="left:0;top:0" width="1149" height="861" viewBox="0 0 1149 861">
<defs><filter id="sh" x="-20%" y="-20%" width="150%" height="150%"><feGaussianBlur stdDeviation="1.6"/></filter>
<g id="ar1"><path d="M574.4 179.1L614.6 133" fill="none" stroke-width="1.7"/><path d="M621.3 125.2L611.3 131.3L617.2 135.4Z"/></g>
<g id="ar2"><path d="M387 433.4L348.3 372.6" fill="none" stroke-width="1.7"/><path d="M343.1 364.4L345.7 374.3L351.4 370.7Z"/></g>
<g id="ar3"><path d="M378.3 538.5L313.5 589" fill="none" stroke-width="1.7"/><path d="M305.3 594.8L310.9 586.7L316.5 592.1Z"/></g>
</defs>
<g filter="url(#sh)" stroke="#000" fill="#000" opacity=".38" transform="translate(3.5,3.5)"><use href="#ar1"/><use href="#ar2"/><use href="#ar3"/></g>
<g stroke="#ff0000" fill="#ff0000"><use href="#ar1"/><use href="#ar2"/><use href="#ar3"/></g>
</svg>

</div></body></html>
